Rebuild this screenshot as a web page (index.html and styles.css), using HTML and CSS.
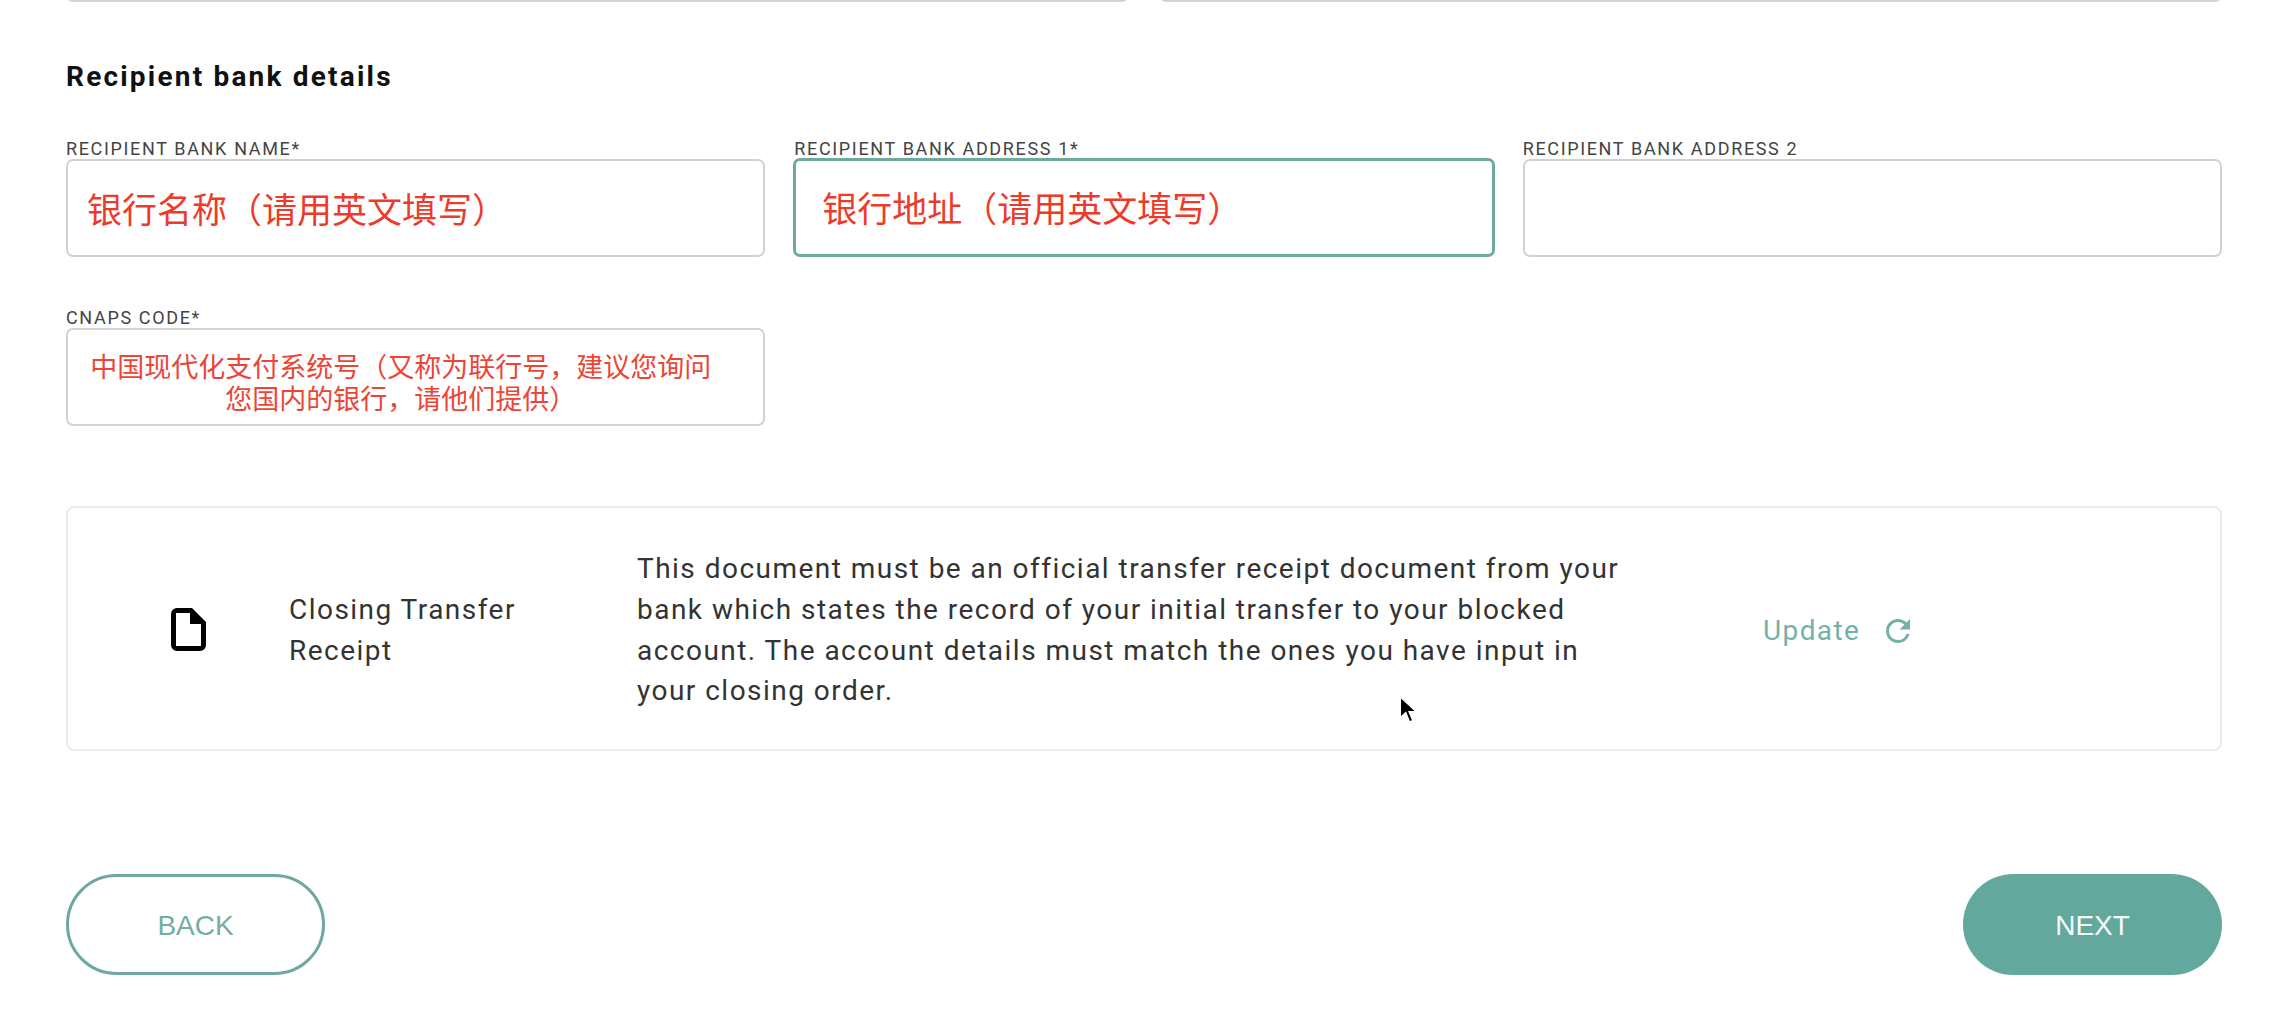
FILE: index.html
```html
<!DOCTYPE html>
<html lang="en">
<head>
    <meta charset="UTF-8">
    <meta name="viewport" content="width=device-width, initial-scale=1.0">
    <title>Recipient bank details</title>
    <link rel="stylesheet" href="styles.css">
</head>
<body>

<div class="page">
    <div class="row-two">
        <div class="field-box"></div>
        <div class="field-box"></div>
    </div>

    <h2 class="section-title">Recipient bank details</h2>

    <div class="form-grid">
        <div class="field">
            <label>RECIPIENT BANK NAME*</label>
            <div class="field-box note">银行名称（请用英文填写）</div>
        </div>
        <div class="field">
            <label>RECIPIENT BANK ADDRESS 1*</label>
            <div class="field-box note focused">银行地址（请用英文填写）</div>
        </div>
        <div class="field">
            <label>RECIPIENT BANK ADDRESS 2</label>
            <div class="field-box"></div>
        </div>
        <div class="field">
            <label>CNAPS CODE*</label>
            <div class="field-box note small">中国现代化支付系统号（又称为联行号，建议您询问<br>您国内的银行，请他们提供）</div>
        </div>
    </div>

    <div class="doc-card">
        <svg class="doc-icon" viewBox="0 0 35 43" width="35" height="43">
            <path fill-rule="evenodd" d="M6 0H21L35 14V37a6 6 0 0 1-6 6H6a6 6 0 0 1-6-6V6a6 6 0 0 1 6-6ZM5 5V38H30V16H19V5Z"/>
        </svg>
        <div class="doc-title">Closing Transfer<br>Receipt</div>
        <div class="doc-text">This document must be an official transfer receipt document from your bank which states the record of your initial transfer to your blocked account. The account details must match the ones you have input in your closing order.</div>
        <a class="doc-update">
            Update
            <svg class="refresh-icon" viewBox="4 4 16 16" width="24" height="24">
                <path d="M17.65 6.35A7.95 7.95 0 0 0 12 4c-4.42 0-7.99 3.58-7.99 8s3.57 8 7.99 8c3.73 0 6.84-2.55 7.73-6h-2.08A5.99 5.99 0 0 1 12 18c-3.31 0-6-2.69-6-6s2.69-6 6-6c1.66 0 3.14.69 4.22 1.78L13 11h7V4l-2.35 2.35z"/>
            </svg>
        </a>
    </div>

    <div class="buttons">
        <button class="back">BACK</button>
        <button class="next">NEXT</button>
    </div>
</div>

<svg class="cursor" viewBox="0 0 18 26" width="20" height="28">
    <path d="M1 1V20L6 15.5L9.5 24L12.5 22.8L9 14.5H15.5Z"/>
</svg>

</body>
</html>
```
FILE: styles.css
```css
html, body {
    margin: 0;
    height: 100%;
    overflow: hidden;
    background-color: #fff;
}
body {
    font-family: Roboto, Arial, sans-serif;
    color: #333;
}
.page {
    margin-top: -96px;
    padding: 0 52px 0 66px;
}
.row-two {
    display: flex;
    gap: 30px;
}
.field-box {
    box-sizing: border-box;
    flex: 1;
    height: 98px;
    border: 2px solid #d2d2d2;
    border-radius: 7px;
    background: #fff;
}
.section-title {
    margin: 57px 0 0;
    font-size: 28px;
    line-height: 36px;
    font-weight: 700;
    letter-spacing: 2.2px;
    color: #111;
}
.form-grid {
    display: grid;
    grid-template-columns: repeat(3, 1fr);
    gap: 50px 29px;
    margin-top: 43px;
}
.field label {
    display: block;
    height: 21px;
    font-size: 18px;
    line-height: 21px;
    letter-spacing: 1.65px;
    color: #444;
}
.note {
    display: flex;
    align-items: center;
    padding: 0 0 2px 19px;
    font-family: "Noto Sans CJK SC", sans-serif;
    font-size: 35px;
    color: #ec3b2a;
}
.note.focused {
    margin: -1px -1px 0;
    padding-left: 26px;
    border: 3px solid #6fa8a0;
    height: 99px;
}
.note.small {
    display: block;
    padding: 20px 50px 0 20px;
    text-align: center;
    font-size: 27px;
    line-height: 32px;
    color: #ec4536;
}
.doc-card {
    box-sizing: border-box;
    display: flex;
    align-items: center;
    height: 245px;
    margin-top: 80px;
    padding: 4px 0 0 103px;
    border: 2px solid #ececec;
    border-radius: 8px;
}
.doc-icon {
    flex: none;
    margin: -3px 83px 0 0;
    fill: #000;
}
.doc-title, .doc-text {
    font-size: 28px;
    line-height: 40.6px;
    letter-spacing: 1.47px;
}
.doc-title {
    width: 348px;
    flex: none;
}
.doc-text {
    width: 1000px;
    flex: none;
}
.doc-update {
    display: flex;
    align-items: center;
    gap: 26px;
    margin-left: 126px;
    font-size: 28px;
    letter-spacing: 1.4px;
    color: #74b1a7;
}
.refresh-icon {
    fill: #74b1a7;
}
.buttons {
    display: flex;
    justify-content: space-between;
    margin-top: 123px;
}
button {
    box-sizing: border-box;
    width: 259px;
    height: 101px;
    padding-top: 3px;
    border-radius: 51px;
    font-family: "Liberation Sans", Arial, sans-serif;
    font-size: 28px;
    cursor: pointer;
}
button.back {
    border: 3px solid #6fa8a0;
    background-color: #fff;
    color: #70aea4;
}
button.next {
    border: none;
    background-color: #62a89c;
    color: #f4fbfa;
}
.cursor {
    position: absolute;
    left: 1399px;
    top: 696px;
    fill: #000;
    stroke: #fff;
    stroke-width: 1.2;
}
```
